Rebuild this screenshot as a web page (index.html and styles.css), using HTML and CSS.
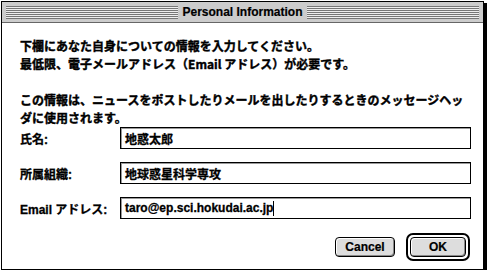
FILE: index.html
```html
<!DOCTYPE html>
<html lang="ja">
<head>
  <meta charset="UTF-8" />
  <title>Personal Information</title>
  <link rel="stylesheet" href="styles.css">
</head>
<body>
  <div class="window">
    <div class="titlebar">
      <div class="stripes"></div>
      <div class="title">Personal Information</div>
      <div class="stripes"></div>
    </div>
    <div class="content">
      <p class="note">下欄にあなた自身についての情報を入力してください。<br>最低限、電子メールアドレス（Email アドレス）が必要です。</p>
      <p class="note">この情報は、ニュースをポストしたりメールを出したりするときのメッセージヘッダに使用されます。</p>

      <div class="form">
        <label class="label">氏名:</label>
        <div class="field">地惑太郎</div>

        <label class="label">所属組織:</label>
        <div class="field">地球惑星科学専攻</div>

        <label class="label">Email アドレス:</label>
        <div class="field">taro@ep.sci.hokudai.ac.jp<span class="caret"></span></div>
      </div>

      <div class="buttons">
        <button class="btn">Cancel</button>
        <div class="default-ring"><button class="btn ok">OK</button></div>
      </div>
    </div>
  </div>
</body>
</html>
```

FILE: styles.css
```css
* {
  margin: 0;
  padding: 0;
  box-sizing: border-box;
}

body {
  background: #fff;
  font-family: "Liberation Sans", "Noto Sans CJK JP", sans-serif;
  font-weight: bold;
  font-size: 12px;
  color: #000;
}

.window {
  margin: 1px 0 0 1px;
  width: 483px;
  height: 269px;
  border: 1px solid #000;
  box-shadow: 3px 2px 0 #000;
  background: #fff;
}

.titlebar {
  display: flex;
  align-items: center;
  height: 21px;
  padding: 0 4px;
  background: #cccccc;
  border-bottom: 1px solid #666;
}

.stripes {
  flex: 1;
  height: 13px;
  background: repeating-linear-gradient(to bottom, #777 0, #777 1px, #eee 1px, #eee 2px);
}

.title {
  padding: 0 4px;
  font-size: 12px;
  line-height: 14px;
  -webkit-text-stroke: 0.2px #000;
}

.content {
  padding: 14px 13px 0 18px;
}

.note {
  font-family: "Noto Sans CJK JP", sans-serif;
  line-height: 18px;
  margin-bottom: 18px;
  -webkit-text-stroke: 0.4px #000;
}

.form {
  display: grid;
  grid-template-columns: 100px 351px;
  row-gap: 13px;
  align-items: center;
  margin-top: -18px;
}

.label,
.field {
  font-family: "Liberation Sans", "Noto Sans CJK JP", sans-serif;
  -webkit-text-stroke: 0.3px #000;
}

.field {
  height: 22px;
  border: 1px solid #000;
  box-shadow: inset 1px 1px 0 #999;
  padding: 0 4px;
  display: flex;
  align-items: center;
}

.caret {
  display: inline-block;
  width: 1px;
  height: 15px;
  background: #000;
}

.buttons {
  display: flex;
  justify-content: flex-end;
  align-items: center;
  gap: 11px;
  margin-top: 14px;
}

.btn {
  width: 60px;
  height: 20px;
  border: 1px solid #000;
  border-radius: 4px;
  background: #ddd;
  box-shadow: inset 1px 1px 0 #fff, inset -1px -1px 0 #888;
  font-family: "Liberation Sans", sans-serif;
  font-weight: bold;
  font-size: 12px;
  color: #000;
  -webkit-text-stroke: 0.2px #000;
}

.default-ring {
  padding: 2px;
  border: 2px solid #000;
  border-radius: 7px;
  background: #fff;
}

.ok {
  width: 56px;
}
```
